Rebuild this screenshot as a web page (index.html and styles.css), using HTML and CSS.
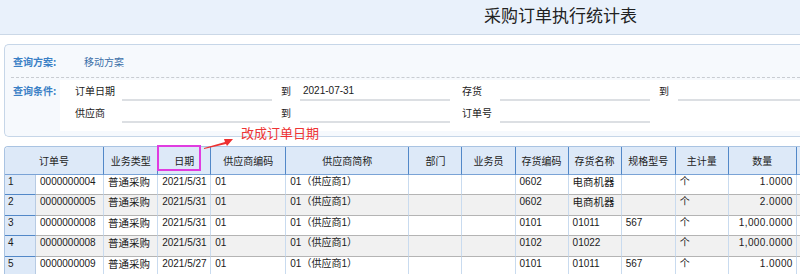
FILE: index.html
```html
<!DOCTYPE html>
<html lang="zh-CN">
<head>
  <meta charset="UTF-8">
  <title>采购订单执行统计表</title>
  <link rel="stylesheet" href="styles.css">
</head>
<body>
  <div class="titlebar">
    <h1 class="title">采购订单执行统计表</h1>
  </div>

  <div class="query">
    <div class="scheme-row">
      <span class="qlabel">查询方案:</span>
      <span class="scheme">移动方案</span>
    </div>
    <div class="cond-row">
      <span class="qlabel">查询条件:</span>
      <div class="cond-grid">
        <span class="f-label">订单日期</span>
        <span class="f-input"></span>
        <span class="f-to">到</span>
        <span class="f-input">2021-07-31</span>
        <span class="f-label f-mid">存货</span>
        <span class="f-input"></span>
        <span class="f-to">到</span>
        <span class="f-input"></span>

        <span class="f-label">供应商</span>
        <span class="f-input"></span>
        <span class="f-to">到</span>
        <span class="f-input"></span>
        <span class="f-label f-mid">订单号</span>
        <span class="f-input"></span>
      </div>
    </div>
  </div>

  <div class="grid-wrap">
    <table class="grid">
      <colgroup>
        <col style="width:31px"><col style="width:68px"><col style="width:54px"><col style="width:53px">
        <col style="width:75px"><col style="width:123px"><col style="width:53px"><col style="width:53px">
        <col style="width:53px"><col style="width:53px"><col style="width:54px"><col style="width:53px">
        <col style="width:68px"><col style="width:60px">
      </colgroup>
      <thead>
        <tr>
          <th colspan="2">订单号</th>
          <th>业务类型</th>
          <th>日期</th>
          <th>供应商编码</th>
          <th>供应商简称</th>
          <th>部门</th>
          <th>业务员</th>
          <th>存货编码</th>
          <th>存货名称</th>
          <th>规格型号</th>
          <th>主计量</th>
          <th>数量</th>
          <th></th>
        </tr>
      </thead>
      <tbody>
        <tr>
          <td class="rn">1</td><td>0000000004</td><td class="zh">普通采购</td><td>2021/5/31</td><td>01</td>
          <td>01（供应商1）</td><td></td><td></td><td>0602</td><td class="zh">电商机器</td><td></td><td>个</td>
          <td class="num">1.0000</td><td></td>
        </tr>
        <tr>
          <td class="rn">2</td><td>0000000005</td><td class="zh">普通采购</td><td>2021/5/31</td><td>01</td>
          <td>01（供应商1）</td><td></td><td></td><td>0602</td><td class="zh">电商机器</td><td></td><td>个</td>
          <td class="num">2.0000</td><td></td>
        </tr>
        <tr>
          <td class="rn">3</td><td>0000000008</td><td class="zh">普通采购</td><td>2021/5/31</td><td>01</td>
          <td>01（供应商1）</td><td></td><td></td><td>0101</td><td>01011</td><td>567</td><td>个</td>
          <td class="num">1,000.0000</td><td></td>
        </tr>
        <tr>
          <td class="rn">4</td><td>0000000008</td><td class="zh">普通采购</td><td>2021/5/31</td><td>01</td>
          <td>01（供应商1）</td><td></td><td></td><td>0102</td><td>01022</td><td></td><td>个</td>
          <td class="num">1,000.0000</td><td></td>
        </tr>
        <tr>
          <td class="rn">5</td><td>0000000009</td><td class="zh">普通采购</td><td>2021/5/27</td><td>01</td>
          <td>01（供应商1）</td><td></td><td></td><td>0101</td><td>01011</td><td>567</td><td>个</td>
          <td class="num">1.0000</td><td></td>
        </tr>
      </tbody>
    </table>
  </div>

  <!-- annotation drawn over the screenshot -->
  <div class="mark"></div>
  <svg class="arrow" width="40" height="20" viewBox="0 0 40 20">
    <polygon points="1,12 22,6 21,3 30,3 24,10 23,8 1,13" fill="#ee3030"/>
  </svg>
  <div class="note">改成订单日期</div>
</body>
</html>
```

FILE: styles.css
```css
body, html {
  margin: 0;
  padding: 0;
  height: 100%;
  overflow: hidden;
}

body {
  position: relative;
  width: 800px;
  background: #ffffff;
  color: #1a1a1a;
  font-family: 'Liberation Sans', 'Noto Sans CJK SC', sans-serif;
  font-size: 10px;
}

/* title bar */
.titlebar {
  height: 34px;
  background: #e9f1fb;
  border-bottom: 1px solid #cbd8e7;
}

.title {
  margin: 0;
  padding-left: 484px;
  font-family: 'Noto Sans CJK SC', sans-serif;
  font-size: 17px;
  font-weight: normal;
  line-height: 30px;
  color: #222;
  white-space: nowrap;
}

/* query panel */
.query {
  margin: 9px 0 0 4px;
  border: 1px solid #c6d6e8;
  border-right: 0;
  border-radius: 5px 0 0 5px;
  background: #f6f9fd;
  overflow: hidden;
}

.qlabel {
  width: 47px;
  flex: none;
  color: #3a80c6;
  font-family: 'Noto Sans CJK SC', sans-serif;
  font-weight: bold;
  white-space: nowrap;
}

.scheme-row {
  display: flex;
  align-items: center;
  height: 32px;
  margin-left: 6px;
  padding-left: 2px;
  border-bottom: 1px dashed #c8ccd2;
}

.scheme {
  margin-left: 24px;
  color: #3b6fa8;
  font-family: 'Noto Sans CJK SC', sans-serif;
}

.cond-row {
  display: flex;
  padding: 2px 0 5px 8px;
}

.cond-row .qlabel {
  line-height: 22px;
}

.cond-grid {
  flex: 1;
  min-width: 0;
  display: grid;
  grid-template-columns: 47px 150px 28px 150px 50px 150px 28px 150px;
  grid-auto-rows: 22px;
  padding: 0 0 7px 15px;
  background: #ffffff;
  line-height: 22px;
  font-family: 'Noto Sans CJK SC', sans-serif;
  overflow: hidden;
}

.f-label,
.f-to {
  white-space: nowrap;
}

.f-to {
  padding-left: 9px;
}

.f-mid {
  padding-left: 12px;
}

.f-input {
  box-sizing: border-box;
  height: 21px;
  line-height: 21px;
  padding-left: 3px;
  border-bottom: 2px solid #dcdfe3;
  font-family: 'Liberation Sans', sans-serif;
}

/* data grid */
.grid-wrap {
  margin: 9px 0 0 4px;
  overflow: hidden;
}

.grid {
  width: 853px;
  table-layout: fixed;
  border-collapse: separate;
  border-spacing: 0;
  border-top: 1px solid #a9c3e2;
  border-left: 1px solid #a9c3e2;
  border-top-left-radius: 4px;
}

.grid th {
  height: 27px;
  padding: 0;
  background: #dde9f8;
  border-right: 1px solid #5288c8;
  border-bottom: 1px solid #7aa3d6;
  font-family: 'Noto Sans CJK SC', sans-serif;
  font-weight: normal;
  color: #222;
  white-space: nowrap;
}

.grid th:first-child {
  border-top-left-radius: 4px;
}

.grid td {
  height: 18px;
  padding: 1px 4px 0;
  vertical-align: top;
  line-height: 12px;
  border-right: 1px solid #c9dbef;
  border-bottom: 1px solid #b4b4b4;
  white-space: nowrap;
  overflow: hidden;
}

.grid tbody tr:nth-child(even) td {
  height: 19px;
  background: #f1f1f1;
}

.grid td.rn {
  padding-left: 3px;
  background: #dde9f8;
  border-right: 1px solid #b7cbe3;
  border-bottom: 1px solid #5288c8;
}

.grid tbody tr:nth-child(even) td.rn {
  background: #dde9f8;
}

.grid td.zh {
  font-family: 'Noto Sans CJK SC', sans-serif;
  font-size: 10.5px;
}

.grid td.num {
  text-align: right;
  padding-right: 3px;
  letter-spacing: 0.4px;
}

/* annotation */
.mark {
  position: absolute;
  left: 157px;
  top: 145px;
  width: 40px;
  height: 22px;
  border: 2px solid #e03ce0;
}

.arrow {
  position: absolute;
  left: 203px;
  top: 136px;
}

.note {
  position: absolute;
  left: 241px;
  top: 124px;
  color: #ee3333;
  font-family: 'Noto Sans CJK SC', sans-serif;
  font-size: 13px;
  line-height: 18px;
  white-space: nowrap;
}
```
